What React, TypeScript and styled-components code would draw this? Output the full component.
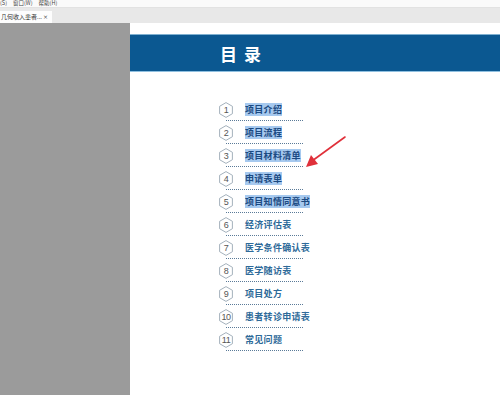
import React from "react";
import styled, { createGlobalStyle } from "styled-components";

const Global = createGlobalStyle`
  html, body { margin: 0; padding: 0; background: #fff; }
  body { font-family: "Noto Sans CJK SC", "Noto Sans", sans-serif; }
`;

const Frame = styled.div`
  width: 500px;
  height: 395px;
  display: flex;
  flex-direction: column;
  overflow: hidden;
  position: relative;
`;

const MenuBar = styled.div`
  height: 7px;
  background: #fafafa;
  border-bottom: 1px solid #e2e2e2;
  display: flex;
  align-items: center;
  gap: 6px;
  font-size: 5.5px;
  line-height: 7px;
  color: #444;
  white-space: nowrap;
`;

const MenuItem = styled.span``;

const TabBar = styled.div`
  height: 15px;
  background: #e8e8e8;
  display: flex;
  align-items: flex-end;
`;

const Tab = styled.div`
  width: 52px;
  height: 12px;
  background: #fdfdfd;
  display: flex;
  align-items: center;
  justify-content: space-between;
  padding: 0 4px 0 1px;
  font-size: 6px;
  line-height: 12px;
  color: #333;
  box-sizing: border-box;
  white-space: nowrap;
  overflow: hidden;
`;

const Close = styled.span`
  font-size: 6px;
  color: #555;
  font-family: "DejaVu Sans", sans-serif;
`;

const Body = styled.div`
  flex: 1;
  display: flex;
`;

const Side = styled.div`
  width: 130px;
  background: #9b9b9b;
`;

const Page = styled.div`
  flex: 1;
  background: #fff;
  display: flex;
  flex-direction: column;
  padding-top: 11px;
  position: relative;
`;

const Banner = styled.div`
  height: 36px;
  background: #0b5891;
  border-top: 1px solid #7fb0d0;
  border-bottom: 1px solid #8fc0e0;
  display: flex;
  align-items: center;
  padding-left: 90px;
`;

const Title = styled.h1`
  margin: 0;
  color: #fff;
  font-size: 17px;
  font-weight: 700;
  letter-spacing: 7px;
  font-family: "Noto Sans CJK SC", sans-serif;
`;

const List = styled.div`
  display: flex;
  flex-direction: column;
  padding-top: 26px;
  margin-left: 96px;
  width: 77px;
`;

const Row = styled.div`
  height: 22px;
  border-bottom: 1px dotted #5a7a98;
  display: flex;
  align-items: center;
  white-space: nowrap;
`;

const Hex = styled.div`
  position: relative;
  width: 14px;
  height: 16px;
  margin-left: -7px;
  margin-top: 2px;
  flex: none;
  display: flex;
  align-items: center;
  justify-content: center;
  font-size: 9px;
  color: #555;
  font-family: "Liberation Sans", sans-serif;
  svg { position: absolute; inset: 0; }
  span { position: relative; letter-spacing: -0.5px; }
`;

const Label = styled.span<{ $sel: boolean }>`
  margin-left: 12px;
  font-size: 9px;
  line-height: 11px;
  font-weight: 700;
  letter-spacing: 0.3px;
  color: ${(p) => (p.$sel ? "#1b4a82" : "#2e6a99")};
  background: ${(p) => (p.$sel ? "#a6c9ef" : "transparent")};
  padding: 1px 0;
`;

const Arrow = styled.svg`
  position: absolute;
  left: 170px;
  top: 110px;
  width: 50px;
  height: 40px;
`;

const items = [
  "项目介绍",
  "项目流程",
  "项目材料清单",
  "申请表单",
  "项目知情同意书",
  "经济评估表",
  "医学条件确认表",
  "医学随访表",
  "项目处方",
  "患者转诊申请表",
  "常见问题",
];

export default function App() {
  return (
    <Frame>
      <Global />
      <MenuBar>
        <MenuItem>(S)</MenuItem>
        <MenuItem>窗口(W)</MenuItem>
        <MenuItem>帮助(H)</MenuItem>
      </MenuBar>
      <TabBar>
        <Tab>
          <span>几何收入患者...</span>
          <Close>×</Close>
        </Tab>
      </TabBar>
      <Body>
        <Side />
        <Page>
          <Banner>
            <Title>目录</Title>
          </Banner>
          <List>
            {items.map((t, i) => (
              <Row key={t}>
                <Hex>
                  <svg viewBox="0 0 14 16" width="14" height="16">
                    <polygon
                      points="7,0.6 13.4,4.3 13.4,11.7 7,15.4 0.6,11.7 0.6,4.3"
                      fill="#fff"
                      stroke="#9aa8b4"
                      strokeWidth="0.9"
                    />
                  </svg>
                  <span>{i + 1}</span>
                </Hex>
                <Label $sel={i < 5}>{t}</Label>
              </Row>
            ))}
          </List>
          <Arrow viewBox="0 0 50 40">
            <line x1="45" y1="4" x2="12" y2="28" stroke="#e0303a" strokeWidth="1.6" strokeLinecap="round" />
            <polygon points="6,34 11,22 18,31" fill="#e0303a" />
          </Arrow>
        </Page>
      </Body>
    </Frame>
  );
}
